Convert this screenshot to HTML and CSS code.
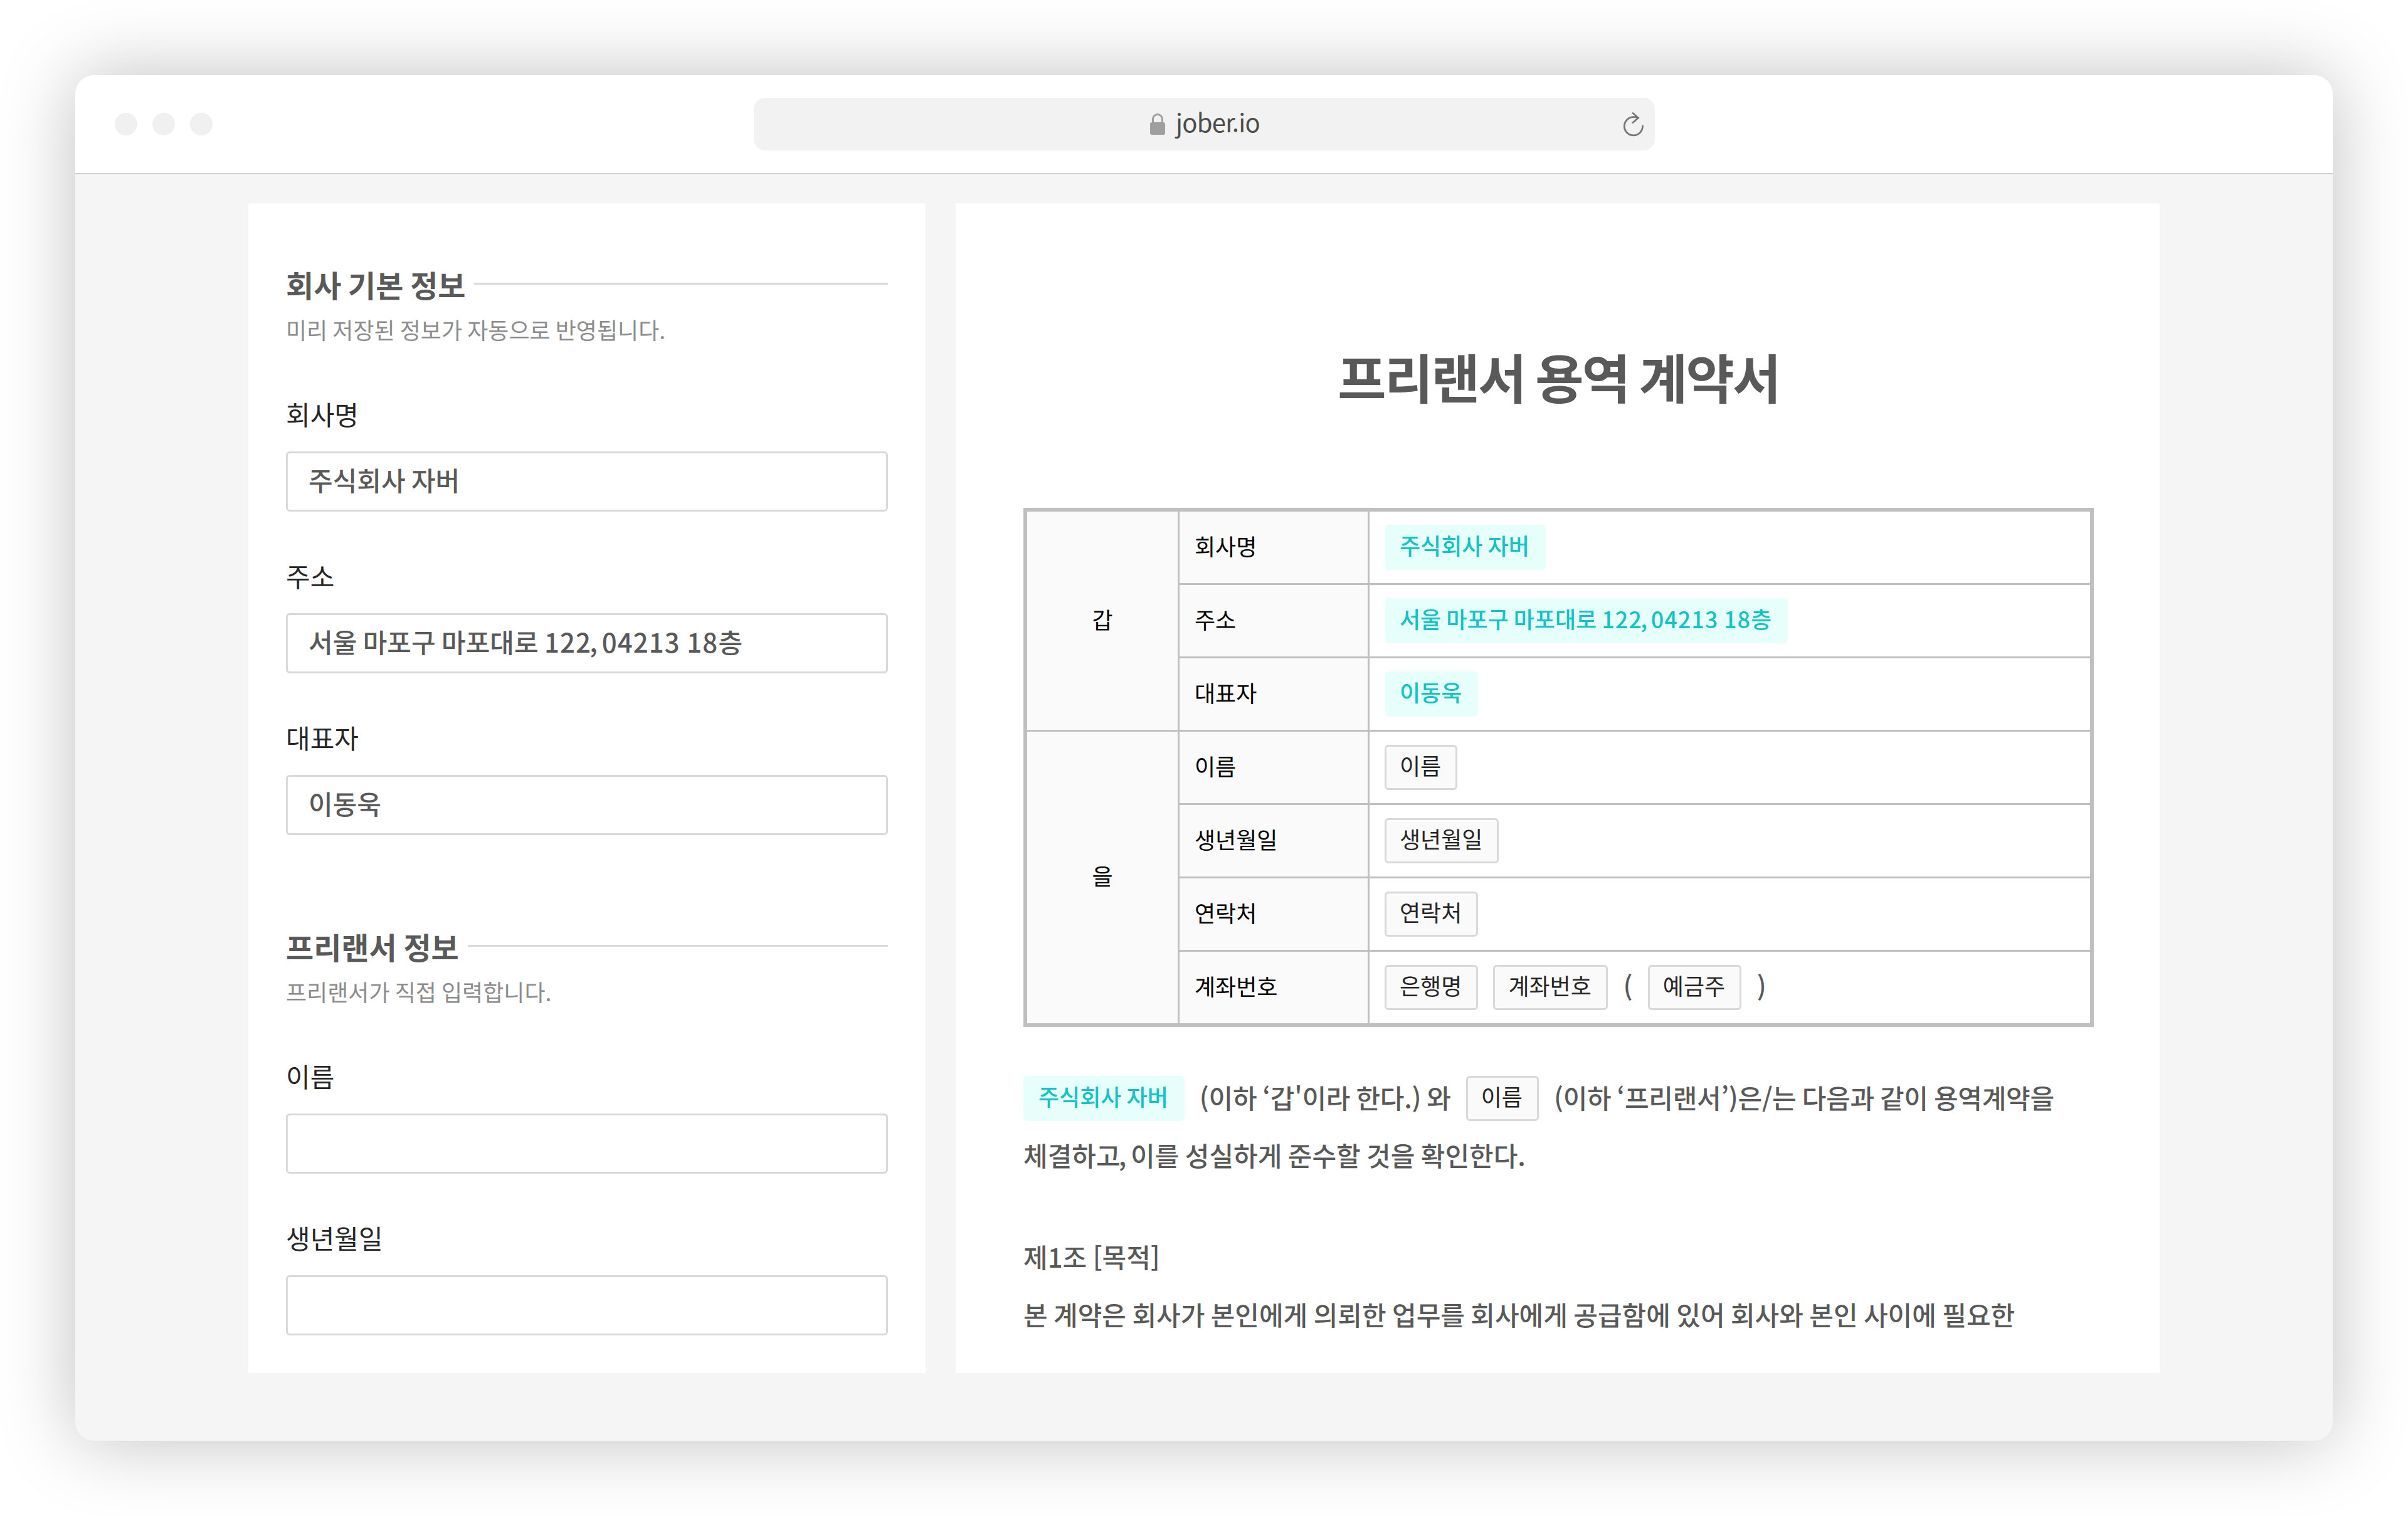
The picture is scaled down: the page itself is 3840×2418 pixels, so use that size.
FILE: index.html
```html
<!DOCTYPE html>
<html lang="ko">
<head>
<meta charset="utf-8">
<title>프리랜서 용역 계약서</title>
<link rel="stylesheet" href="styles.css">
</head>
<body>
<div class="window">
  <header class="titlebar">
    <div class="dots"><i class="dot"></i><i class="dot"></i><i class="dot"></i></div>
    <div class="address">
      <svg class="lock" viewBox="0 0 24 36"><path d="M4.500 16V10a7.500 7.500 0 0 1 15 0V16" fill="none" stroke="#9f9f9f" stroke-width="3"/><rect x="0" y="15" width="24" height="20" rx="3" fill="#9f9f9f"/></svg>
      <span class="host">jobe<span class="kern">r</span>.io</span>
      <svg class="reload" viewBox="0 0 32 40"><path d="M30.500 23A14.600 14.600 0 1 1 16 8.700q4 0 7.500 1.300M15 2.500l8.500 7.500-8.500 7.500" fill="none" stroke="#777" stroke-width="2.800" stroke-linecap="round"/></svg>
    </div>
  </header>
  <main class="content">
    <section class="panel form">
      <div class="group">
        <h2 class="group-title">회사 기본 정보</h2>
        <p class="hint">미리 저장된 정보가 자동으로 반영됩니다.</p>
        <div class="field"><label class="label">회사명</label><div class="input">주식회사 자버</div></div>
        <div class="field"><label class="label">주소</label><div class="input">서울 마포구 마포대로 <span class="num">122</span><span class="comma">,</span> <span class="num">04213 18</span>층</div></div>
        <div class="field"><label class="label">대표자</label><div class="input">이동욱</div></div>
      </div>
      <div class="group">
        <h2 class="group-title">프리랜서 정보</h2>
        <p class="hint">프리랜서가 직접 입력합니다.</p>
        <div class="field"><label class="label">이름</label><div class="input"></div></div>
        <div class="field"><label class="label">생년월일</label><div class="input"></div></div>
      </div>
    </section>
    <section class="panel document">
      <h1 class="doc-title">프리랜서 용역 계약서</h1>
      <div class="parties">
        <div class="cell head party-a">갑</div>
        <div class="cell head">회사명</div><div class="cell"><span class="tag filled">주식회사 자버</span></div>
        <div class="cell head">주소</div><div class="cell"><span class="tag filled">서울 마포구 마포대로 <span class="num">122</span><span class="comma">,</span> <span class="num">04213 18</span>층</span></div>
        <div class="cell head">대표자</div><div class="cell"><span class="tag filled">이동욱</span></div>
        <div class="cell head party-b">을</div>
        <div class="cell head">이름</div><div class="cell"><span class="tag">이름</span></div>
        <div class="cell head">생년월일</div><div class="cell"><span class="tag">생년월일</span></div>
        <div class="cell head">연락처</div><div class="cell"><span class="tag">연락처</span></div>
        <div class="cell head">계좌번호</div><div class="cell"><span class="tag">은행명</span><span class="tag">계좌번호</span><span class="paren">(</span><span class="tag">예금주</span><span class="paren">)</span></div>
      </div>
      <div class="line first"><span class="tag filled">주식회사 자버</span><span class="words">(이하 ‘갑'이라 한다.) 와</span><span class="tag">이름</span><span class="words">(이하 ‘프리랜서’)은/는 다음과 같이 용역계약을</span></div>
      <p class="line second">체결하고<span class="comma">,</span> 이를 성실하게 준수할 것을 확인한다.</p>
      <p class="line article">제1조 [목적]</p>
      <p class="line">본 계약은 회사가 본인에게 의뢰한 업무를 회사에게 공급함에 있어 회사와 본인 사이에 필요한</p>
    </section>
  </main>
</div>
</body>
</html>
```
FILE: styles.css
```css
* { box-sizing: border-box; margin: 0; padding: 0; }
body {
  padding: 120px;
  background: #fff;
  color: #595959;
  font-family: "Noto Sans CJK KR", sans-serif;
  font-size: 42px;
  line-height: 66px;
}
.window {
  height: 2178px;
  border-radius: 30px;
  background: #f5f5f5;
  box-shadow: 0 0 120px rgba(0, 0, 0, 0.25);
  overflow: hidden;
}
.titlebar {
  display: grid;
  grid-template-columns: 1fr 1437px 1fr;
  align-items: center;
  height: 158px;
  padding: 0 63px;
  border-bottom: 2px solid #d3d3d3;
  background: #fff;
}
.dots { display: flex; gap: 24px; }
.dot { width: 36px; height: 36px; border-radius: 50%; background: #f0f0f0; }
.address {
  display: flex;
  align-items: center;
  justify-content: center;
  position: relative;
  height: 84px;
  border-radius: 18px;
  background: #f2f2f2;
}
.lock { width: 24px; height: 36px; margin-right: 17px; }
.host {
  width: 131px;
  margin-bottom: 9px;
  font-size: 40px;
  line-height: 54px;
  letter-spacing: -0.7px;
  color: #4c4c4c;
  white-space: nowrap;
}
.kern { letter-spacing: -5px; }
.reload { position: absolute; right: 18px; top: 22px; width: 32px; height: 40px; }
.content { display: flex; gap: 48px; padding: 46px 276px 0; }
.panel { height: 1866px; background: #fff; overflow: hidden; }
.form { width: 1080px; padding: 96px 60px 0; }
.group + .group { margin-top: 144px; }
.group-title, .hint, .input, .tag, .line, .doc-title { word-spacing: -0.056em; }
.num { letter-spacing: 0.026em; }
.comma { margin-left: -0.07em; letter-spacing: -0.06em; }
.group-title {
  display: flex;
  align-items: center;
  gap: 14px;
  height: 72px;
  padding-bottom: 6px;
  font-size: 48px;
  line-height: 66px;
  font-weight: 700;
}
.group-title::after { content: ""; flex: 1; height: 3px; margin-top: -1px; background: #d9d9d9; }
.hint { color: #8c8c8c; font-size: 36px; line-height: 66px; }
.field { margin-top: 69px; }
.label { display: block; color: #262626; }
.input {
  height: 96px;
  margin-top: 27px;
  padding: 0 33px;
  border: 3px solid #d9d9d9;
  border-radius: 6px;
  line-height: 84px;
  font-weight: 500;
}
.document { width: 1920px; padding: 216px 105px 0 108px; font-weight: 500; }
.doc-title {
  height: 126px;
  font-size: 84px;
  line-height: 120px;
  font-weight: 700;
  letter-spacing: -2.6px;
  text-align: center;
}
.parties {
  display: grid;
  grid-template-columns: 240px 300px 1fr;
  grid-auto-rows: 114px;
  gap: 3px;
  margin-top: 144px;
  border: 6px solid #bfbfbf;
  background: #bfbfbf;
}
.cell { display: flex; align-items: center; gap: 24px; padding: 0 24px; background: #fff; }
.head { padding-bottom: 7px; background: #fafafa; color: #000; font-size: 36px; font-weight: 400; }
.party-a { grid-row: 1 / 4; justify-content: center; }
.party-b { grid-row: 4 / 8; justify-content: center; }
.tag {
  height: 72px;
  padding: 0 23px 0 21px;
  border: 3px solid #d9d9d9;
  border-radius: 6px;
  background: #fafafa;
  color: #262626;
  font-size: 36px;
  line-height: 59px;
  font-weight: 400;
}
.filled { border-color: #e6fffb; background: #e6fffb; color: #13c2c2; font-weight: 500; }
.paren { width: 16px; padding-bottom: 6px; text-align: center; }
.line { line-height: 92px; white-space: nowrap; }
.first { display: flex; align-items: center; gap: 24px; height: 92px; margin-top: 68px; }
.words { padding-bottom: 5px; line-height: 66px; letter-spacing: -0.25px; }
.second { margin-top: -2px; }
.article { margin-top: 70px; }
```
